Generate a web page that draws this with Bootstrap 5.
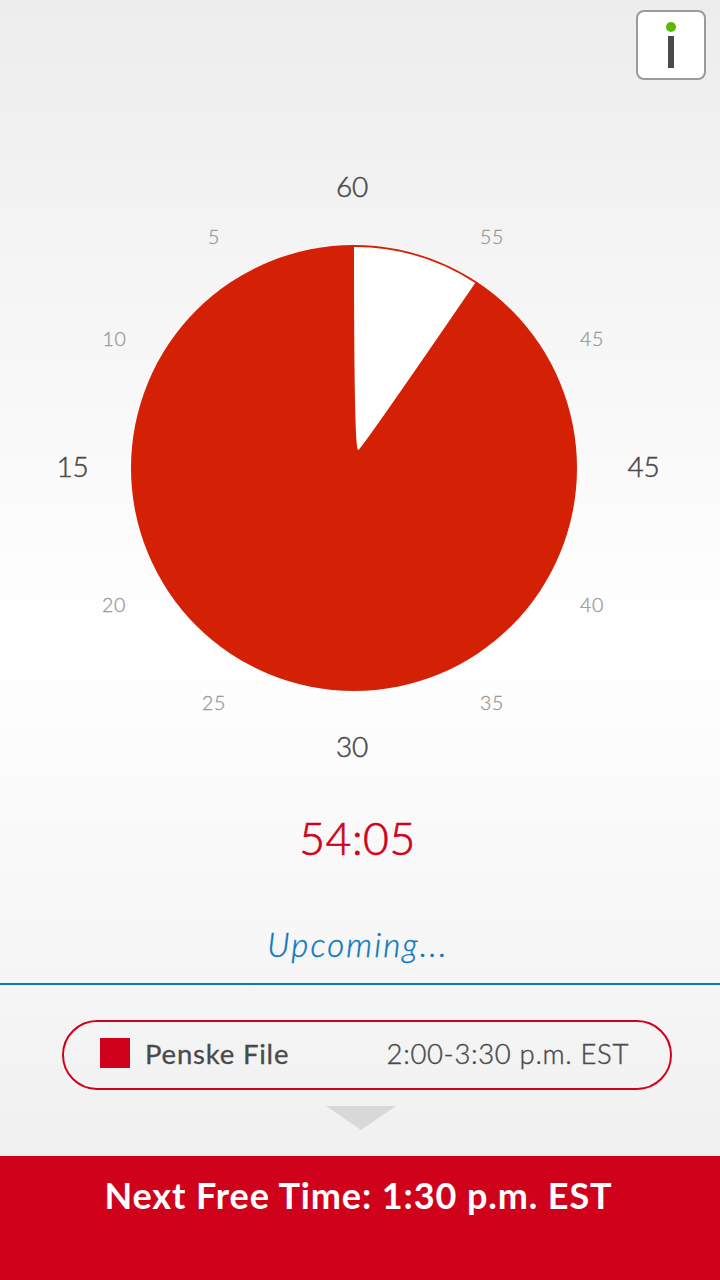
<!DOCTYPE html>
<html lang="en">
<head>
<meta charset="utf-8">
<meta name="viewport" content="width=device-width, initial-scale=1">
<title>Meeting Timer</title>
<link href="https://cdn.jsdelivr.net/npm/bootstrap@5.3.0/dist/css/bootstrap.min.css" rel="stylesheet">
<style>
  :root { --brand: #d0021b; --ink: #4a4a4a; --link: #0c78c0; }
  body { font-family: Lato, "Liberation Sans", sans-serif; color: var(--ink); height: 1280px;
         background: linear-gradient(#ededed 0, #fff 50%, #f0f0f0 91%); line-height: 1; }
  .topbar { height: 90px; padding: 10px 14px; }
  .info-btn { width: 70px; height: 70px; background: #fff; border: 2px solid #9b9b9b; border-radius: 8px; }
  .info-btn:hover { background: #fff; border-color: #9b9b9b; }
  .dial { font-weight: 300; }
  .dial .major { font-size: 28px; fill: var(--ink); stroke: var(--ink); stroke-width: .5px; letter-spacing: -.3px; }
  .dial .minor { font-size: 19.5px; fill: #9b9b9b; stroke: #9b9b9b; stroke-width: .35px; letter-spacing: .6px; }
  .countdown { height: 96px; font-size: 44.5px; line-height: 96px; font-weight: 300; color: var(--brand); padding-right: 5px;
               letter-spacing: .5px; -webkit-text-stroke: .7px var(--brand); }
  .upcoming { height: 99px; padding: 38px 4px 0 0; font-size: 33px; line-height: 40px; font-style: italic; font-weight: 300;
              letter-spacing: 2.1px; color: var(--link); -webkit-text-stroke: .4px var(--link); border-bottom: 2px solid var(--link); }
  .event { height: 70px; margin: 35px 48px 0 62px; padding: 0 41px 3px 36px; border: 2px solid var(--brand); font-size: 27.5px; }
  .swatch { width: 30px; height: 30px; background: var(--brand); margin: -1px 15px 0 0; }
  .event-name { font-weight: 400; letter-spacing: .8px; -webkit-text-stroke: .3px var(--ink); }
  .event-time { font-weight: 300; letter-spacing: .65px; -webkit-text-stroke: .4px var(--ink); }
  .more { height: 66px; padding: 16px 0 0 2px; }
  .free { height: 124px; background: var(--brand); color: #fff; font-size: 36px; line-height: 40px; font-weight: 700;
          padding: 19px 3px 0 0; letter-spacing: .9px; }
</style>
</head>
<body class="d-flex flex-column overflow-hidden">
  <header class="topbar d-flex justify-content-end">
    <button class="info-btn btn p-0 d-flex align-items-center justify-content-center" aria-label="Info">
      <svg width="66" height="66" viewBox="638 12 66 66"><circle cx="671" cy="27" r="5" fill="#5cb800"/><path d="M668 36h6v32h-6z" fill="#4a4a4a"/></svg>
    </button>
  </header>
  <main>
    <svg class="dial d-block" width="720" height="700" viewBox="0 90 720 700">
      <circle cx="354" cy="468" r="223" fill="#d42105"/>
      <path d="M354 247A221 221 0 0 1 475.200 283Q367 441 358.500 450Q357.300 450 357 446Q354 425 354 247Z" fill="#fff"/>
      <g class="major" text-anchor="middle">
        <text x="352" y="196.500">60</text><text x="643.500" y="476.500">45</text>
        <text x="352" y="756.500">30</text><text x="72.500" y="476.500">15</text>
      </g>
      <g class="minor" text-anchor="middle">
        <text x="214" y="244">5</text><text x="492" y="244">55</text>
        <text x="114.500" y="346">10</text><text x="592" y="346">45</text>
        <text x="114" y="612">20</text><text x="592" y="612">40</text>
        <text x="214" y="710">25</text><text x="492" y="710">35</text>
      </g>
    </svg>
    <div class="countdown text-center">54:05</div>
    <div class="upcoming text-center">Upcoming...</div>
    <div class="event rounded-pill d-flex align-items-center">
      <span class="swatch"></span>
      <span class="event-name">Penske File</span>
      <span class="event-time ms-auto">2:00-3:30 p.m. EST</span>
    </div>
    <div class="more d-flex justify-content-center">
      <svg width="70" height="24" viewBox="0 0 70 24"><path d="M0 0h70L35 24z" fill="#d8d8d8"/></svg>
    </div>
  </main>
  <footer class="free text-center">Next Free Time: 1:30 p.m. EST</footer>
<script src="https://cdn.jsdelivr.net/npm/bootstrap@5.3.0/dist/js/bootstrap.bundle.min.js"></script>
</body>
</html>
